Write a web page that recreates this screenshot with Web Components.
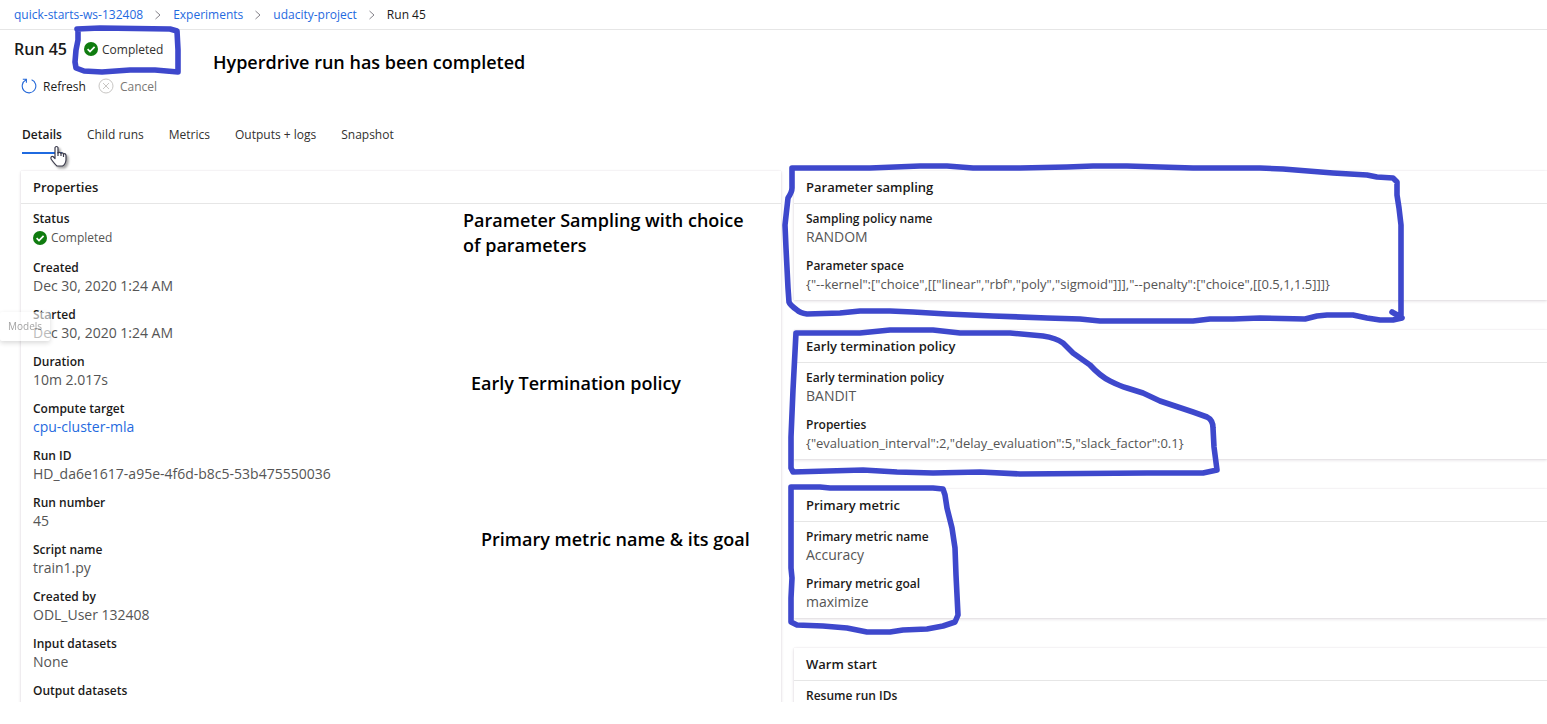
<!DOCTYPE html>
<html lang="en">
<head>
<meta charset="utf-8">
<title>Run 45</title>
<style>
  html, body { margin: 0; background: #fff; }
  body { font-family: "Open Sans", "Noto Sans", sans-serif; font-size: 12px; color: #1b1a19; }
</style>
</head>
<body>
<run-page></run-page>
<script>
const define = (name, html) => {
  const template = document.createElement('template');
  template.innerHTML = html;
  customElements.define(name, class extends HTMLElement {
    constructor() {
      super();
      this.attachShadow({ mode: 'open' }).append(template.content.cloneNode(true));
    }
  });
};

define('status-icon', `
<style>:host { display: inline-flex; } svg { display: block; }</style>
<svg width="14" height="14" viewBox="0 0 14 14" aria-hidden="true">
  <circle cx="7" cy="7" r="7" fill="#107c10"/>
  <path d="M3.6 7.2 6 9.5l4.6-4.7" fill="none" stroke="#fff" stroke-width="1.7"/>
</svg>`);

define('crumb-bar', `
<style>
  :host { display: block; border-bottom: 1px solid #e6e6e6; }
  nav { display: flex; align-items: center; gap: 12px; height: 29px; padding: 0 14px; white-space: nowrap; }
  a { color: #1f6ae0; text-decoration: none; }
  svg { flex: none; }
</style>
<nav aria-label="Breadcrumb">
  <a href="#workspace">quick-starts-ws-132408</a>
  <svg width="6" height="10" viewBox="0 0 6 10"><path d="M.5 1 5 5 .5 9" fill="none" stroke="#85838a"/></svg>
  <a href="#experiments">Experiments</a>
  <svg width="6" height="10" viewBox="0 0 6 10"><path d="M.5 1 5 5 .5 9" fill="none" stroke="#85838a"/></svg>
  <a href="#project">udacity-project</a>
  <svg width="6" height="10" viewBox="0 0 6 10"><path d="M.5 1 5 5 .5 9" fill="none" stroke="#85838a"/></svg>
  <span>Run 45</span>
</nav>`);

define('run-heading', `
<style>
  :host { display: flex; align-items: center; gap: 17px; height: 38px; padding: 0 14px; }
  h1 { margin: 0; font-size: 16px; line-height: 20px; font-weight: 600; }
  span { display: flex; align-items: center; gap: 4px; color: #323130; }
</style>
<h1><slot></slot></h1>
<span><status-icon></status-icon><slot name="status"></slot></span>`);

define('run-toolbar', `
<style>
  :host { display: flex; align-items: center; gap: 12px; height: 36px; padding: 0 21px; }
  button { display: flex; align-items: center; gap: 6px; padding: 0; border: 0; background: none; font: inherit; color: #1b1a19; }
  button:disabled { color: #797775; }
</style>
<button type="button">
  <svg width="16" height="16" viewBox="0 0 16 16"><path d="M10.6 1.8A6.8 6.8 0 1 1 4.8 2.1M1.8 1.2H5.4V4.8" fill="none" stroke="#2468d8" stroke-width="1.1"/></svg>Refresh
</button>
<button type="button" disabled>
  <svg width="16" height="16" viewBox="0 0 16 16"><g fill="none" stroke="#c8c6c4"><circle cx="8" cy="8" r="7"/><path d="M5 5l6 6M11 5l-6 6"/></g></svg>Cancel
</button>`);

define('run-tabs', `
<style>
  :host { display: flex; gap: 25px; margin-top: 12px; padding: 0 22px; }
  button { height: 38px; padding: 0; border: 0; border-bottom: 2px solid transparent; background: none; font: inherit; color: #323130; }
  button[aria-selected="true"] { font-weight: 600; color: #1b1a19; border-color: #1f6ae0; }
</style>
<button role="tab" aria-selected="true">Details</button>
<button role="tab" aria-selected="false">Child runs</button>
<button role="tab" aria-selected="false">Metrics</button>
<button role="tab" aria-selected="false">Outputs + logs</button>
<button role="tab" aria-selected="false">Snapshot</button>`);

define('info-card', `
<style>
  :host { display: block; background: #fff; box-shadow: 0 1px 3px rgba(50,30,50,.16), 0 0 1px rgba(50,30,50,.12); }
  h2 { margin: 0; padding: 0 12px; height: 32px; line-height: 32px; font-size: 13px; font-weight: 600; border-bottom: 1px solid #e6e6e6; }
  div { display: flex; flex-direction: column; gap: 11px; padding: 6px 12px 7px; }
</style>
<h2><slot name="title"></slot></h2>
<div><slot></slot></div>`);

define('info-field', `
<style>
  :host { display: block; }
  .label { line-height: 18px; font-weight: 600; }
  .value { line-height: 18px; font-size: 14px; color: #555; white-space: nowrap; }
  :host([json]) .value { font-size: 13px; }
  ::slotted(a) { color: #1f6ae0; text-decoration: none; }
  ::slotted(.status) { display: flex; align-items: center; gap: 4px; height: 20px; font-size: 12px; }
</style>
<div class="label"><slot name="label"></slot></div>
<div class="value"><slot></slot></div>`);

define('side-tooltip', `
<style>
  :host { position: absolute; left: 0; top: 312px; padding: 0 8px; line-height: 29px; font-size: 10px; color: #666; background: #fff; opacity: .6; border-radius: 2px; box-shadow: 0 2px 5px rgba(0,0,0,.25); }
</style>
<slot></slot>`);

define('ink-layer', `
<style>
  :host { position: absolute; inset: 0; overflow: hidden; pointer-events: none; color: #000; font-size: 18px; line-height: 25px; font-weight: 600; }
  svg { position: absolute; left: 0; top: 0; overflow: visible; }
  p { position: absolute; margin: 0; white-space: nowrap; }
</style>
<svg width="1" height="1" aria-hidden="true">
  <g fill="none" stroke="#3e48cc" stroke-width="5.600" stroke-linejoin="round" stroke-linecap="round">
    <path d="M77 29 100 28 170 29 177 31 178 50 178 72 155 70 130 70 102 72 84 71 76 68 75 62 76 50 78 40 78 30"/>
    <path d="M792 168 830 168 870 168 920 166 947 166 973 168 1020 168 1067 167 1093 166 1127 166 1160 167 1193 168 1260 168 1283 169 1333 173 1367 175 1377 177 1393 178 1397 182 1397 195 1399 208 1401 225 1401 317 1392 312 1402 318 1393 320 1380 320 1367 318 1353 315 1327 315 1317 316 1305 319 1260 318 1233 319 1210 319 1193 321 1100 321 1080 319 1047 318 993 316 947 314 913 312 890 311 860 311 840 313 807 314Q800 313 797 310Q790 305 789 302L788 288 786 248 785 225 788 198Q792 192 792 188Z"/>
    <path d="M796 333 860 333 890 330 933 330 960 333 1010 333 1043 336Q1056 338 1063 343L1073 353 1090 365Q1100 376 1110 381T1127 388L1143 393 1160 401 1193 412 1207 417Q1213 420 1213 428L1214 447 1217 470 1203 473 1147 473 1020 474 980 472 933 473 897 472 863 470 793 472 791 468 791 437 793 390Z"/>
    <path d="M791 487 820 487 830 488 933 488 943 489 945 495 947 508 952 528 955 548 956 575 958 615 955 622 943 626 927 629 903 630 890 632 867 632 847 628 823 626 797 625 791 622 791 598 792 578 791 568 791 525Z"/>
  </g>
  <g transform="translate(50 145)" fill="#fff" stroke="#3d3d4d" stroke-width="1.2" stroke-linejoin="round" style="filter:drop-shadow(2px 2px 1px rgba(0,0,0,.35))">
    <path d="M5 12V2.5Q6.500 .5 8 2.500V8Q9.500 6.500 11 8.300Q12.500 7 13.500 9Q15.500 8 16 10.500V15Q15.500 19.500 12.500 21H7Q5.500 20 1 14Q.5 11 3 11.500L5 13.500Z"/>
    <path d="M8 7v4M11 8v3M13.500 9v3" fill="none"/>
  </g>
</svg>
<p style="left:213px;top:50px">Hyperdrive run has been completed</p>
<p style="left:463px;top:208px">Parameter Sampling with choice<br>of parameters</p>
<p style="left:471px;top:371px">Early Termination policy</p>
<p style="left:481px;top:527px">Primary metric name &amp; its goal</p>`);

define('run-page', `
<style>
  :host { display: block; position: relative; height: calc(100vh - 22px); overflow: hidden; }
  main { display: grid; grid-template-columns: minmax(0, 760fr) minmax(0, 753fr); gap: 13px; padding: 17px 0 0 21px; }
  .right { display: flex; flex-direction: column; gap: 30px; }
  .last { flex: 1; }
</style>
<crumb-bar></crumb-bar>
<run-heading>Run 45<span slot="status">Completed</span></run-heading>
<run-toolbar></run-toolbar>
<run-tabs role="tablist"></run-tabs>
<main>
  <info-card>
    <span slot="title">Properties</span>
    <info-field><span slot="label">Status</span><span class="status"><status-icon></status-icon>Completed</span></info-field>
    <info-field><span slot="label">Created</span>Dec 30, 2020 1:24 AM</info-field>
    <info-field><span slot="label">Started</span>Dec 30, 2020 1:24 AM</info-field>
    <info-field><span slot="label">Duration</span>10m 2.017s</info-field>
    <info-field><span slot="label">Compute target</span><a href="#cluster">cpu-cluster-mla</a></info-field>
    <info-field><span slot="label">Run ID</span>HD_da6e1617-a95e-4f6d-b8c5-53b475550036</info-field>
    <info-field><span slot="label">Run number</span>45</info-field>
    <info-field><span slot="label">Script name</span>train1.py</info-field>
    <info-field><span slot="label">Created by</span>ODL_User 132408</info-field>
    <info-field><span slot="label">Input datasets</span>None</info-field>
    <info-field><span slot="label">Output datasets</span></info-field>
  </info-card>
  <div class="right">
    <info-card>
      <span slot="title">Parameter sampling</span>
      <info-field><span slot="label">Sampling policy name</span>RANDOM</info-field>
      <info-field json><span slot="label">Parameter space</span>{"--kernel":["choice",[["linear","rbf","poly","sigmoid"]]],"--penalty":["choice",[[0.5,1,1.5]]]}</info-field>
    </info-card>
    <info-card>
      <span slot="title">Early termination policy</span>
      <info-field><span slot="label">Early termination policy</span>BANDIT</info-field>
      <info-field json><span slot="label">Properties</span>{"evaluation_interval":2,"delay_evaluation":5,"slack_factor":0.1}</info-field>
    </info-card>
    <info-card>
      <span slot="title">Primary metric</span>
      <info-field><span slot="label">Primary metric name</span>Accuracy</info-field>
      <info-field><span slot="label">Primary metric goal</span>maximize</info-field>
    </info-card>
    <info-card class="last">
      <span slot="title">Warm start</span>
      <info-field><span slot="label">Resume run IDs</span></info-field>
    </info-card>
  </div>
</main>
<side-tooltip>Models</side-tooltip>
<ink-layer></ink-layer>`);
</script>
</body>
</html>
